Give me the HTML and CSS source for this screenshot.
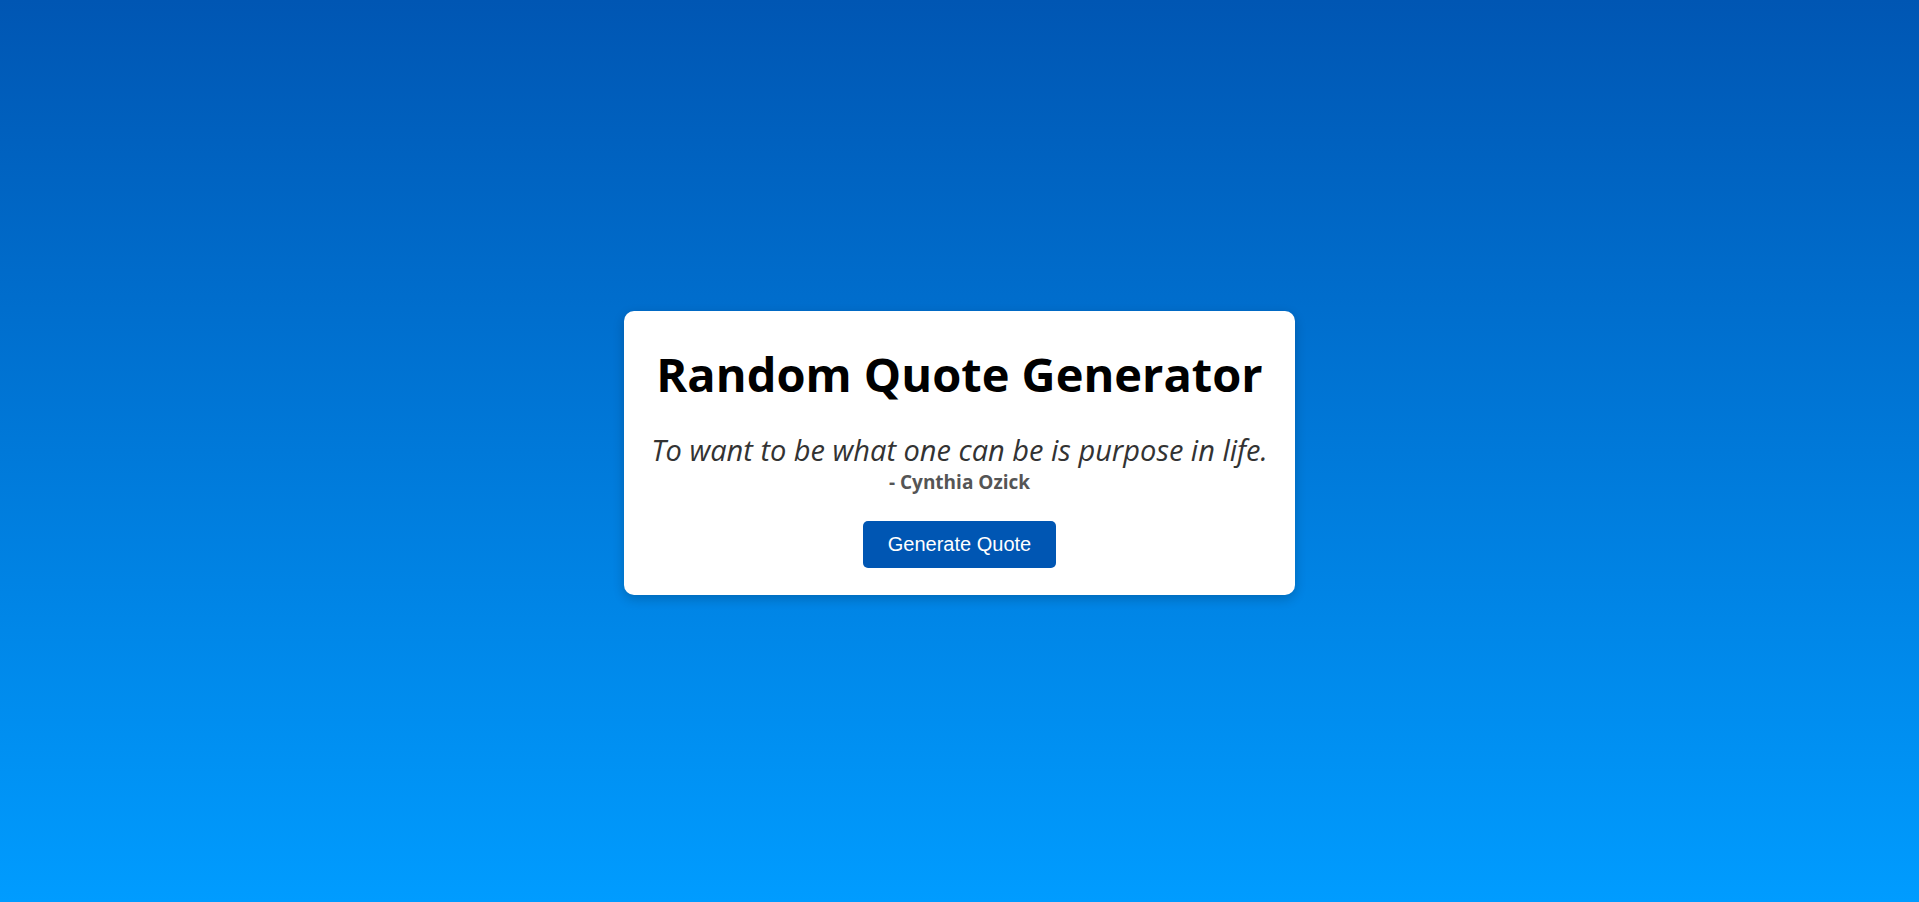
FILE: index.html
```html
<!DOCTYPE html>
<html lang="en">
<head>
<meta charset="utf-8">
<title>Random Quote Generator</title>
<link rel="stylesheet" href="styles.css">
</head>
<body>
<main class="card">
  <h1 class="title">Random Quote Generator</h1>
  <p class="quote">To want to be what one can be is purpose in life.</p>
  <p class="author">- Cynthia Ozick</p>
  <button class="btn" type="button">Generate Quote</button>
</main>
</body>
</html>
```
FILE: styles.css
```css
html, body {
  margin: 0;
  height: 100%;
}
body {
  background: linear-gradient(to bottom, #0056b3 0%, #009cff 100%);
  display: flex;
  align-items: center;
  justify-content: center;
  font-family: "Open Sans", "Noto Sans", sans-serif;
}
.card {
  background: #fff;
  border-radius: 10px;
  box-shadow: 0 4px 12px rgba(0, 0, 0, 0.2);
  width: 671px;
  box-sizing: border-box;
  padding: 31px 20px 27px;
  margin-top: 4px;
  display: flex;
  flex-direction: column;
  align-items: center;
  text-align: center;
}
.title {
  margin: 0;
  font-size: 47px;
  font-weight: 700;
  line-height: 64px;
  color: #000;
}
.quote {
  margin: 25px 0 0;
  font-size: 29px;
  font-style: italic;
  line-height: 38px;
  color: #333;
}
.author {
  margin: 0;
  font-size: 19px;
  font-weight: 700;
  line-height: 26px;
  color: #555;
}
.btn {
  margin-top: 26px;
  background: #0056b3;
  color: #fff;
  border: none;
  border-radius: 5px;
  padding: 12px 25px;
  font-family: "Liberation Sans", Arial, sans-serif;
  font-size: 20px;
  line-height: 23px;
  cursor: pointer;
}
```
